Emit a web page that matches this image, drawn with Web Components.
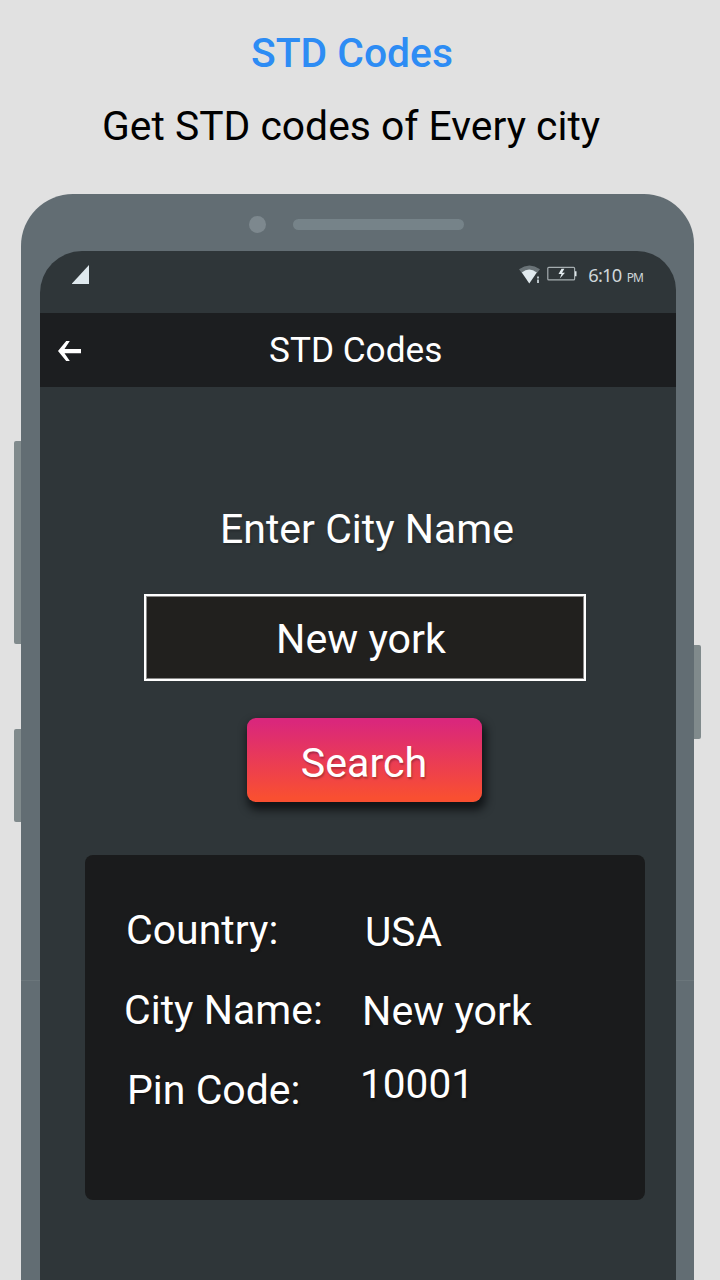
<!DOCTYPE html>
<html lang="en">
<head>
<meta charset="utf-8">
<title>STD Codes</title>
<style>
html,body{margin:0;height:1280px;overflow:hidden;background:#e1e1e1}
body{font-family:Roboto,sans-serif}
</style>
</head>
<body>
<promo-page></promo-page>
<script>
function define(name, html) {
  const tpl = document.createElement('template');
  tpl.innerHTML = html;
  customElements.define(name, class extends HTMLElement {
    constructor() {
      super();
      this.attachShadow({ mode: 'open' }).append(tpl.content.cloneNode(true));
    }
  });
}

define('promo-heading', `
<style>
:host{display:block;height:194px;box-sizing:border-box;padding-top:28px;white-space:nowrap}
h1{margin:0 0 0 251px;font-weight:500;font-size:40.800px;line-height:50px;color:#2d8cf4}
p{margin:23px 0 0 102px;font-size:40.850px;line-height:50px;color:#000}
</style>
<h1><slot name="title"></slot></h1><p><slot></slot></p>`);

define('status-bar', `
<style>
:host{display:flex;height:62px;box-sizing:border-box;padding:14px 33px 0 32px;align-items:flex-start;color:#cfd6da}
svg{display:block;flex:none}
.gap{flex:1}
.wifi{margin-right:6px}
.battery{margin:1px 11px 0 0}
.time{font:18.300px/20px "Noto Sans",sans-serif;letter-spacing:-.7px;white-space:nowrap}
small{font-size:12px;letter-spacing:-.9px;margin-left:5px}
</style>
<svg width="18" height="20" viewBox="0 0 18 20"><path d="M17 0V19H-.5Z" fill="#dfe9ee"/></svg>
<span class="gap"></span>
<svg class="wifi" width="22" height="20" viewBox="0 0 22 20">
<path d="M0 4.200Q10.500-3.200 21 4.200L17.800 8.200Q10.500 2.500 3 8.200Z" fill="#6a7377"/>
<path d="M2.800 7.600Q10.200 1.600 17.800 7.600L10.300 18.500Z" fill="#e1eaee"/>
<path d="M18 11.600h2v2h-2zM18 14.600h2v3.400h-2z" fill="#b9c3c8"/></svg>
<svg class="battery" width="30" height="16" viewBox="0 0 30 16">
<rect x=".8" y="1.300" width="26.800" height="12.600" rx="1" fill="none" stroke="#a5adb0" stroke-width="1.200"/>
<path d="M28 5.200h1.500v5H28z" fill="#dfe7eb"/><path d="M14.500 2.800 11.500 8h3l-1.700 4.500 5.200-5.800h-3l2.400-3.900Z" fill="#e3ebef"/></svg>
<span class="time"><slot></slot><small><slot name="period"></slot></small></span>`);

define('app-bar', `
<style>
:host{display:flex;height:74px;align-items:center;background:#1c1e20;color:#fff}
svg{display:block;margin:2px 0 0 17px}
h2{margin:0 0 0 187px;font-weight:400;font-size:35.200px;line-height:42px;white-space:nowrap}
</style>
<svg width="25" height="22" viewBox="0 0 25 22"><path d="M12.800 1H9.200L1 11 9.200 21H12.800L7.500 13.200H24V9H7.500Z" fill="#fff"/></svg>
<h2><slot></slot></h2>`);

define('city-field', `
<style>
:host{display:block;color:#fff;font-size:41px;line-height:50px;white-space:nowrap}
label{display:block;margin-left:180px;text-shadow:1px 2px 2px #0003}
.box{margin:40px 0 0 104px;width:442px;height:87px;box-sizing:border-box;border:2px solid #fff;background:#21201e;box-shadow:inset 0 0 0 1px #8a8a89;padding:18px 0 0 130px;font-size:41.200px}
</style>
<label><slot name="label"></slot></label><div class="box"><slot></slot></div>`);

define('search-button', `
<style>
:host{display:block;margin:37px 0 0 207px}
button{display:block;width:235px;height:84px;border:0;border-radius:9px;padding:6px 1px 0 0;background:linear-gradient(#da277b 5%,#f94f31 95%);box-shadow:2px 6px 8px 2px #0b0e10d0;color:#fff;font:41.200px/50px Roboto,sans-serif;text-shadow:1px 2px 2px #0004}
</style>
<button><slot></slot></button>`);

define('result-row', `
<style>
:host{display:flex;height:50px;white-space:nowrap}
.key{width:var(--key-width);padding-left:var(--key-indent)}
.value{margin-top:var(--value-drop);font-size:var(--value-size,41px)}
</style>
<span class="key"><slot name="key"></slot></span><span class="value"><slot></slot></span>`);

define('result-card', `
<style>
:host{display:flex;flex-direction:column;gap:30px;box-sizing:border-box;width:560px;height:345px;margin:53px 0 0 45px;padding:50px 0 0 39px;border-radius:8px;background:#1a1b1c;color:#fff;font-size:41px;line-height:50px;text-shadow:1px 2px 2px #0004}
</style>
<slot></slot>`);

define('phone-frame', `
<style>
:host{display:grid;grid-template-columns:21px 673px 26px;height:1086px}
.rail{display:flex;flex-direction:column}
.left{align-items:flex-end}
.key{width:7px;background:#808a8c}
.left .key{border-radius:2px 0 0 2px}
.right .key{border-radius:0 2px 2px 0}
.body{display:flex;flex-direction:column;box-sizing:border-box;border-radius:52px 50px 0 0;background:linear-gradient(#6b767b,#6b767b) 0 786px/100% 1px no-repeat #626d73;padding:0 18px 0 19px}
.top{display:flex;align-items:center;height:57px;padding:4px 0 0 209px;box-sizing:border-box}
.camera{width:17px;height:17px;border-radius:50%;background:#7d888e}
.speaker{width:171px;height:11px;border-radius:6px;margin-left:27px;background:#768389}
.screen{flex:1;border-radius:42px 39px 0 0;background:#2f3639;overflow:hidden}
</style>
<div class="rail left"><div class="key" style="margin-top:247px;height:203px"></div><div class="key" style="margin-top:85px;height:93px"></div></div>
<div class="body"><div class="top"><span class="camera"></span><span class="speaker"></span></div><div class="screen"><slot></slot></div></div>
<div class="rail right"><div class="key" style="margin-top:451px;height:94px"></div></div>`);

define('promo-page', `
<style>
:host{display:block;width:720px;height:1280px;overflow:hidden;background:#e1e1e1}
city-field{margin-top:117px}
</style>
<promo-heading><span slot="title">STD Codes</span>Get STD codes of Every city</promo-heading>
<phone-frame>
<status-bar>6:10<span slot="period">PM</span></status-bar>
<app-bar>STD Codes</app-bar>
<city-field><span slot="label">Enter City Name</span>New york</city-field>
<search-button>Search</search-button>
<result-card>
<result-row style="--key-width:239px;--key-indent:2px;--value-drop:2px;--value-size:40.600px"><span slot="key">Country:</span>USA</result-row>
<result-row style="--key-width:238px;--key-indent:0px;--value-drop:1px;--value-size:41.200px"><span slot="key">City Name:</span>New york</result-row>
<result-row style="--key-width:233px;--key-indent:3px;--value-drop:-6px;--value-size:40.600px"><span slot="key">Pin Code:</span>10001</result-row>
</result-card>
</phone-frame>`);
</script>
</body>
</html>
